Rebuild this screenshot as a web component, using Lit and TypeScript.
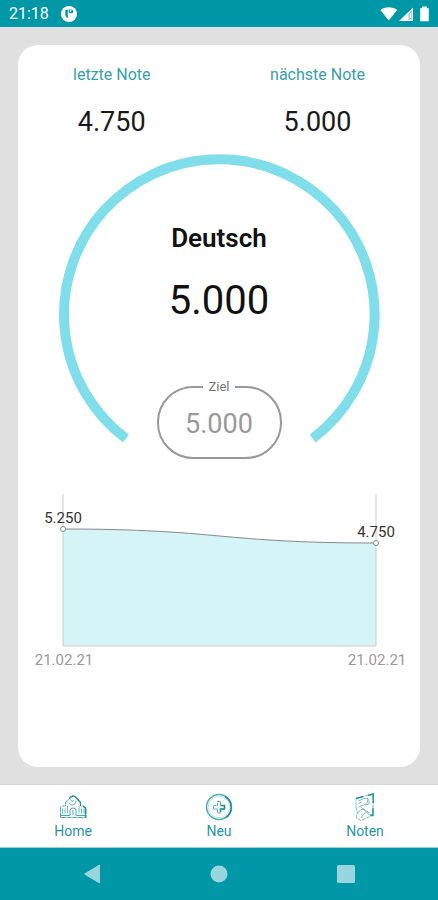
import { LitElement, html, svg, css } from "lit";
import { customElement, property } from "lit/decorators.js";

@customElement("status-bar")
class StatusBar extends LitElement {
  static styles = css`
    :host {
      display: flex;
      align-items: center;
      justify-content: space-between;
      height: 27px;
      padding: 0 8px 0 9px;
      background: #0097a7;
      color: #fff;
      font-size: 16px;
      line-height: 20px;
    }
    .side {
      display: flex;
      align-items: center;
      gap: 12px;
    }
    .side.system {
      gap: 0;
    }
    svg {
      display: block;
    }
  `;

  render() {
    return html`
      <div class="side">
        <time>21:18</time>
        <svg width="16" height="16" viewBox="0 0 16 16" aria-hidden="true">
          <circle cx="8" cy="8" r="8" fill="#fff" />
          <path d="M4.300 4.200 6.800 3.400V12c-1.700-.3-2.500-1.600-2.500-3.200z" fill="#0097a7" />
          <path d="M7.600 3.400h2.600c2.400 0 2.800 3 .8 3.800L7.600 6.800z" fill="#0097a7" />
          <circle cx="9.600" cy="5" r=".9" fill="#fff" />
        </svg>
      </div>
      <div class="side system">
        <svg width="50" height="16" viewBox="0 0 50 16" aria-hidden="true">
          <path d="M.3 4C5 .2 12.500.2 17.200 4L8.800 14.600z" fill="#fff" />
          <path d="M19 15 33 1.500V15z" fill="#fff" />
          <path d="M28.500 7.500 32 4.200V14h-3.500z" fill="#0097a7" opacity=".45" />
          <path d="M30.500 7v5M30.500 13v1" stroke="#fff" stroke-width="1.200" />
          <path d="M42.500.8h4v1.700h2V15h-8V2.500h2z" fill="#fff" stroke="#fff" stroke-width=".6" stroke-linejoin="round" />
        </svg>
      </div>
    `;
  }
}

@customElement("grade-gauge")
class GradeGauge extends LitElement {
  @property() subject = "";
  @property() average = "";
  @property() goal = "";

  static styles = css`
    :host {
      display: grid;
      grid-template-columns: 80%;
      justify-content: center;
    }
    .arc,
    .content {
      grid-area: 1 / 1;
    }
    .arc {
      display: block;
      width: 100%;
    }
    .content {
      display: flex;
      flex-direction: column;
      align-items: center;
      padding-top: 68px;
    }
    h1 {
      margin: 0 0 23px;
      font-size: 26px;
      line-height: 32px;
      font-weight: 600;
      color: #111;
    }
    .average {
      margin: 0 0 54px;
      font-size: 40px;
      line-height: 48px;
      color: #111;
    }
    fieldset {
      box-sizing: border-box;
      width: 125px;
      margin: 0;
      padding: 0 0 4px;
      border: 2px solid #999;
      border-radius: 36px;
    }
    legend {
      margin: 0 auto;
      padding: 0 5px;
      font-size: 13px;
      line-height: 16px;
      color: #777;
    }
    input {
      display: block;
      box-sizing: border-box;
      width: 100%;
      height: 58px;
      padding: 0;
      border: 0;
      background: none;
      outline: none;
      text-align: center;
      font-family: inherit;
      font-size: 27px;
      color: #999;
    }
  `;

  render() {
    return html`
      <svg class="arc" viewBox="0 0 322 290" aria-hidden="true">
        <path d="M68 285A155.500 155.500 0 1 1 255 285" fill="none" stroke="#80deea" stroke-width="10" />
      </svg>
      <div class="content">
        <h1>${this.subject}</h1>
        <p class="average">${this.average}</p>
        <fieldset>
          <legend><label for="goal">Ziel</label></legend>
          <input id="goal" type="text" inputmode="decimal" .value=${this.goal} />
        </fieldset>
      </div>
    `;
  }
}

interface Grade {
  x: number;
  y: number;
  value: string;
  date: string;
}

@customElement("grade-chart")
class GradeChart extends LitElement {
  @property({ attribute: false }) grades: Grade[] = [];

  static styles = css`
    :host {
      display: block;
    }
    svg {
      display: block;
      width: 100%;
    }
    .area {
      fill: #d5f4f7;
    }
    .line {
      fill: none;
      stroke: #888;
    }
    .grid {
      fill: none;
      stroke: #ccc;
    }
    .dot {
      fill: #fff;
      stroke: #888;
    }
    text {
      font-size: 15px;
      text-anchor: middle;
    }
    .value {
      fill: #333;
    }
    .date {
      fill: #999;
    }
  `;

  render() {
    const [a, b] = this.grades;
    const mid = (a.x + b.x) / 2;
    const curve = `M${a.x} ${a.y}C${mid} ${a.y} ${mid} ${b.y} ${b.x} ${b.y}`;
    return html`
      <svg viewBox="0 0 402 180" role="img" aria-label="Notenverlauf">
        <path class="area" d="${curve}V156H${a.x}Z" />
        <path class="grid" d="M${a.x} 4V156H${b.x}V4" />
        <path class="line" d=${curve} />
        ${this.grades.map(
          (g) => svg`
            <circle class="dot" cx=${g.x} cy=${g.y} r="2.5" />
            <text class="value" x=${g.x} y=${g.y - 6}>${g.value}</text>
            <text class="date" x=${g.x + 1} y="175">${g.date}</text>
          `,
        )}
      </svg>
    `;
  }
}

const tabs = [
  {
    label: "Home",
    icon: svg`
      <g fill="none" stroke="#4babb6" stroke-width="1">
        <path d="M1.500 24.500V14.500l2-1.500h3V9.500L10 6.500l1-2.500 3-1.500 3 1.500 1.500 3 3 2.500V13h3.500l2 2v9.500z" stroke-dasharray="5 .7" />
        <path d="M1.500 22.500h9.500v-5q0-2.500 3-2.500t3 2.500v5h9.500M14 17v5" />
        <path d="M3.500 15.500v5M6 15.500v5M8.500 13v7.500M20 13v7.500M22.500 15.500v5M25 15.500v5" stroke-width=".8" />
        <path d="M10 9.500q1.500 3.500 4 2.500 3-1 3-4M11.500 6.500l1.500 2 2-1.500" stroke-width=".9" />
      </g>
      <path d="M10.500 5.500Q14 1 17.500 5l4 4.500V13M24 13.500l2.500 1.500v9.500" fill="none" stroke="#1c93a1" stroke-width="1.300" />`,
  },
  {
    label: "Neu",
    icon: svg`
      <g fill="none" stroke="#4babb6">
        <circle cx="14" cy="14" r="12.500" stroke-width="1.500" />
        <circle cx="14" cy="14" r="10.800" stroke-width=".6" opacity=".6" />
        <path d="M12.500 8.500h3v4h4v3.500h-4v4h-3v-4h-4v-3.500h4z" stroke-width="1.100" stroke-dasharray="3 .7" />
      </g>
      <path d="M20 3.500A12.500 12.500 0 0 1 21 24.500M15.500 12.500h4v3.500h-4v3" fill="none" stroke="#1c93a1" stroke-width="1.600" />`,
  },
  {
    label: "Noten",
    icon: svg`
      <g fill="none" stroke="#6bbac3" stroke-width=".9">
        <path d="M5 5.500 22 1v21.500L18 24l-8 3.500-5-3 1.500-4L5 14z" stroke-dasharray="4 .7" />
        <path d="M7.500 8q5-4 9.500-2.500.5 4-3.500 6.500-4 0-6 2.500M16 5q3 2 2 6l-4 1M7.500 10.500l3-1.500" />
        <path d="M6.500 20.500q3-5 6-4.500l6 6M9.500 14l9.500 6.500M10 25q2-5 7-6.500" />
      </g>
      <path d="M5 5.500 12 3.500M17 2.500 22.200 1v9M22 15v7.500l-3-.5" fill="none" stroke="#1c93a1" stroke-width="1.400" />`,
  },
];

@customElement("tab-bar")
class TabBar extends LitElement {
  static styles = css`
    :host {
      display: block;
      background: #fff;
      border-top: 1px solid #d4d4d4;
      border-bottom: 1px solid #a5cfd4;
    }
    nav {
      display: grid;
      grid-template-columns: repeat(3, 1fr);
    }
    a {
      display: flex;
      flex-direction: column;
      align-items: center;
      gap: 2px;
      padding: 8px 0;
      color: #2a96a5;
      font-size: 14px;
      line-height: 16px;
      text-decoration: none;
    }
    svg {
      display: block;
    }
  `;

  render() {
    return html`
      <nav>
        ${tabs.map(
          (tab) => html`
            <a href="#${tab.label.toLowerCase()}">
              <svg width="28" height="28" viewBox="0 0 28 28" aria-hidden="true">${tab.icon}</svg>
              ${tab.label}
            </a>
          `,
        )}
      </nav>
    `;
  }
}

@customElement("system-bar")
class SystemBar extends LitElement {
  static styles = css`
    :host {
      display: grid;
      grid-template-columns: repeat(3, 1fr);
      height: 52px;
      padding: 0 29px;
      background: #0097a7;
    }
    button {
      display: flex;
      align-items: center;
      justify-content: center;
      padding: 0;
      border: 0;
      background: none;
    }
    svg {
      display: block;
      fill: #99d5dc;
    }
  `;

  render() {
    return html`
      <button aria-label="Zurück">
        <svg width="18" height="20" viewBox="0 0 18 20">
          <path d="M16.500 1v18L1.500 10z" stroke="#99d5dc" stroke-linejoin="round" />
        </svg>
      </button>
      <button aria-label="Startbildschirm">
        <svg width="18" height="18" viewBox="0 0 18 18"><circle cx="9" cy="9" r="8.500" /></svg>
      </button>
      <button aria-label="Übersicht">
        <svg width="18" height="18" viewBox="0 0 18 18"><rect width="18" height="18" rx="1.500" /></svg>
      </button>
    `;
  }
}

@customElement("app-root")
class AppRoot extends LitElement {
  static styles = css`
    :host {
      display: flex;
      flex-direction: column;
      min-height: 100vh;
      background: #e0e0e0;
      font-family: Roboto, "Noto Sans", sans-serif;
    }
    main {
      flex: 1;
      display: flex;
      padding: 18px 18px 17px;
    }
    .card {
      flex: 1;
      min-width: 0;
      padding-top: 20px;
      border-radius: 20px;
      background: #fff;
    }
    .summary {
      display: flex;
      justify-content: space-between;
      margin: 0 0 16px;
      padding: 0 55px;
      text-align: center;
    }
    dt {
      margin-bottom: 21px;
      font-size: 16px;
      line-height: 20px;
      color: #3a9eac;
    }
    dd {
      margin: 0;
      font-size: 27px;
      line-height: 32px;
      color: #1a1a1a;
    }
    grade-chart {
      margin-top: 31px;
    }
  `;

  private grades: Grade[] = [
    { x: 45, y: 39, value: "5.250", date: "21.02.21" },
    { x: 358, y: 53, value: "4.750", date: "21.02.21" },
  ];

  render() {
    return html`
      <status-bar></status-bar>
      <main>
        <section class="card">
          <dl class="summary">
            <div><dt>letzte Note</dt><dd>4.750</dd></div>
            <div><dt>nächste Note</dt><dd>5.000</dd></div>
          </dl>
          <grade-gauge subject="Deutsch" average="5.000" goal="5.000"></grade-gauge>
          <grade-chart .grades=${this.grades}></grade-chart>
        </section>
      </main>
      <tab-bar></tab-bar>
      <system-bar></system-bar>
    `;
  }
}
